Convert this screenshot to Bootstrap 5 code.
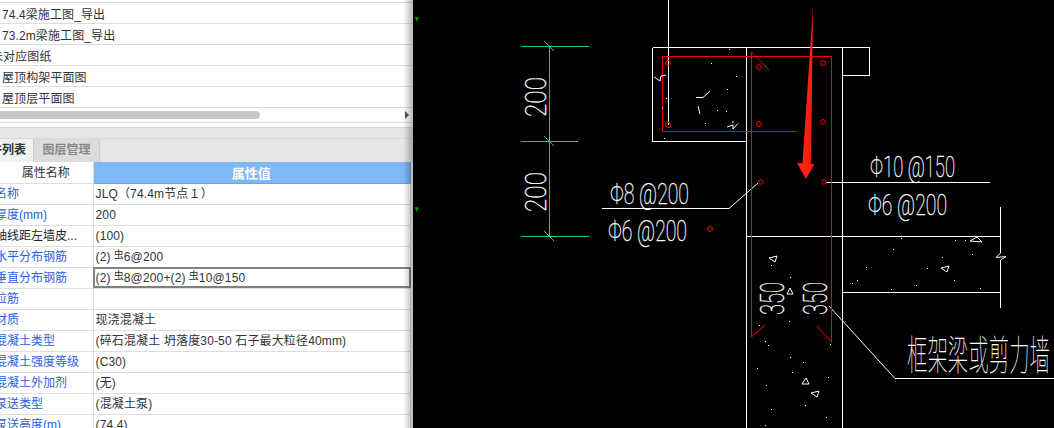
<!DOCTYPE html>
<html lang="zh">
<head>
<meta charset="utf-8">
<title>属性列表</title>
<link href="https://cdn.jsdelivr.net/npm/bootstrap@5.3.0/dist/css/bootstrap.min.css" rel="stylesheet">
<style>
html,body{height:428px;overflow:hidden;background:#000}
body{font:12px/1 "Liberation Sans","Noto Sans CJK SC",sans-serif;color:#333}
.side-panel{width:413px;height:428px;flex:none;background:#fff;overflow:hidden;position:relative}
.side-panel>*{flex:none}
.side-panel::after{content:"";position:absolute;top:0;right:0;bottom:0;width:10px;background:linear-gradient(90deg,rgba(0,0,0,0),rgba(0,0,0,.28));pointer-events:none}
.file-list{padding-top:2px;border-top:0}
.file-list .list-group-item{height:21px;padding:2px 0 0 2px;line-height:20px;background:transparent;color:#333;border:0;border-top:1px solid #ddd;white-space:nowrap;font-size:12px;letter-spacing:.1px}
.file-list .list-group-item:last-child{border-bottom:1px solid #ddd;height:22px}
.clip-in{margin-left:-11px;display:inline-block}
.hscroll{height:14px;position:relative}
.hscroll-thumb{width:260px;height:8px;margin-top:3px;border-radius:0 4px 4px 0;background:#c8c8c8}
.hscroll-arrow{width:0;height:0;border-left:4px solid #555;border-top:4px solid transparent;border-bottom:4px solid transparent;margin-right:4px;margin-top:3px}
.band{height:12px;background:#e6e6e6;border-top:1px solid #d4d4d4;border-bottom:1px solid #d8d8d8;box-sizing:border-box}
.band-wrap{padding-top:4px;border-top:1px solid #ddd}
.tab-row{height:23px;background:#e6e6e6}
.tab-one{width:34px;overflow:hidden;background:#f0f0f0;border-right:1px solid #ccc;font-weight:bold;line-height:23px;color:#333;white-space:nowrap}
.tab-one span{margin-left:-10px;display:inline-block}
.tab-two{width:66px;text-align:center;background:#dcdcdc;border-right:1px solid #ccc;color:#888;font-weight:bold;line-height:23px}
.prop-table{width:411px;table-layout:fixed;margin:0;border-collapse:collapse}
.prop-table th,.prop-table td{height:21px;padding:2px 3px 0 2px;font-size:12px;font-weight:normal;line-height:17px;border:1px solid #ddd;border-left:0;border-top:0;white-space:nowrap;overflow:hidden;color:#333;background:#fff;box-shadow:none;letter-spacing:.15px;vertical-align:middle}
.prop-table th{text-align:center;letter-spacing:0}
.prop-table .val-head{background:#7fb8f5;color:#fff;font-weight:bold;font-size:13px;border-right:1px solid #5d9be0;border-bottom:1px solid #6aa6ea}
.prop-table td.prop-name{color:#2a5fe0;padding:2px 0 0;letter-spacing:0}
.prop-name span{display:block;margin-left:-5px}
.prop-table td.sel-cell{outline:2px solid #808080;outline-offset:-2px}
.rebar{font-size:10px;position:relative;top:-3px;margin:0 0 0 3px}
.cad-view{flex:1 1 auto;background:#000;height:428px;overflow:hidden}
.cad-view svg{display:block}
.cad-w{stroke:#fff;fill:none;stroke-width:1}
.cad-r{stroke:#f00000;fill:none;stroke-width:1}
.cad-g{stroke:#14c88c;fill:none;stroke-width:1}
.cad-txt{font-family:Roboto,"Noto Sans CJK SC",sans-serif;font-weight:100;fill:#fff;stroke:#fff;stroke-width:.35}
.cad-cn{font-family:"Noto Sans CJK SC",sans-serif;font-weight:100;fill:#fff}
.dot{fill:#fff}
</style>
</head>
<body class="d-flex m-0">
<div class="side-panel d-flex flex-column">
  <ul class="list-group list-group-flush file-list rounded-0">
    <li class="list-group-item">74.4梁施工图_导出</li>
    <li class="list-group-item">73.2m梁施工图_导出</li>
    <li class="list-group-item"><span class="clip-in">未对应图纸</span></li>
    <li class="list-group-item">屋顶构架平面图</li>
    <li class="list-group-item">屋顶层平面图</li>
  </ul>
  <div class="hscroll d-flex justify-content-between">
    <div class="hscroll-thumb"></div>
    <div class="hscroll-arrow"></div>
  </div>
  <div class="band-wrap"><div class="band"></div></div>
  <div class="tab-row d-flex">
    <div class="tab-one"><span>件列表</span></div>
    <div class="tab-two">图层管理</div>
  </div>
  <table class="table prop-table">
    <colgroup><col style="width:93px"><col></colgroup>
    <thead><tr><th>属性名称</th><th class="val-head">属性值</th></tr></thead>
    <tbody>
      <tr><td class="prop-name"><span>名称</span></td><td>JLQ（74.4m节点１）</td></tr>
      <tr><td class="prop-name"><span>厚度(mm)</span></td><td>200</td></tr>
      <tr><td class="prop-name text-dark"><span>轴线距左墙皮...</span></td><td>(100)</td></tr>
      <tr><td class="prop-name"><span>水平分布钢筋</span></td><td>(2)<span class="rebar">虫</span>6@200</td></tr>
      <tr><td class="prop-name"><span>垂直分布钢筋</span></td><td class="sel-cell">(2)<span class="rebar">虫</span>8@200+(2)<span class="rebar">虫</span>10@150</td></tr>
      <tr><td class="prop-name"><span>拉筋</span></td><td></td></tr>
      <tr><td class="prop-name"><span>材质</span></td><td>现浇混凝土</td></tr>
      <tr><td class="prop-name"><span>混凝土类型</span></td><td>(碎石混凝土 坍落度30-50 石子最大粒径40mm)</td></tr>
      <tr><td class="prop-name"><span>混凝土强度等级</span></td><td>(C30)</td></tr>
      <tr><td class="prop-name"><span>混凝土外加剂</span></td><td>(无)</td></tr>
      <tr><td class="prop-name"><span>泵送类型</span></td><td>(混凝土泵)</td></tr>
      <tr><td class="prop-name"><span>泵送高度(m)</span></td><td>(74.4)</td></tr>
    </tbody>
  </table>
</div>
<div class="cad-view">
<svg width="641" height="428" viewBox="413 0 641 428" xmlns="http://www.w3.org/2000/svg">
  <path d="M415 18h3l-2 3M415 208h3l-2 3" stroke="#0f0" fill="none"/>
  <g class="cad-g" shape-rendering="crispEdges">
    <path d="M521 46.500H589M521 141.500H578M521 236.500H589M549.500 46V236"/>
  </g>
  <path class="cad-g" d="M544 41L554 51M544 136L554 146M544 231L554 241"/>
  <g class="cad-w" shape-rendering="crispEdges">
    <path d="M668.500 0V125M746.500 47V428M842.500 47V428M652.500 47.500H869.500V75.500H842M652.500 47.500V141.500H746M746 236.500H1000M842 292.500H1000M1000.500 207V253M1000.500 260V308M826 182.500H990M895 378.500H1054M602 208.500H729"/>
  </g>
  <path class="cad-w" d="M729 208.500L758 183M829 306L895 378.500M1000.500 253L996 257.500L1006 256.500L1000.500 260"/>
  <g class="cad-r" shape-rendering="crispEdges">
    <path d="M662.500 131.500V56.500H831.500V342M662.500 131.500H797M751.500 52V337"/>
  </g>
  <g class="cad-r">
    <path d="M751.500 52L769 70M751.500 337L765 325M831.500 342L817 326"/>
    <circle cx="668" cy="63" r="2.500"/><circle cx="668" cy="125" r="2.500"/>
    <circle cx="759" cy="67" r="2.500"/><circle cx="759" cy="124" r="2.500"/>
    <circle cx="823" cy="63" r="2.500"/><circle cx="823" cy="122" r="2.500"/>
    <circle cx="761" cy="182" r="2.200"/><circle cx="824" cy="182" r="2.200"/>
    <circle cx="710" cy="229" r="2.500"/>
  </g>
  <g class="dot">
    <rect x="729" y="49" width="1" height="1"/><rect x="711" y="63" width="1" height="1"/><rect x="736" y="76" width="1" height="1"/>
    <rect x="727" y="89" width="1" height="1"/><rect x="666" y="98" width="1" height="1"/><rect x="662" y="108" width="1" height="1"/>
    <rect x="717" y="110" width="1" height="1"/><rect x="726" y="111" width="1" height="1"/><rect x="705" y="123" width="1" height="1"/>
    <rect x="664" y="138" width="1" height="1"/><rect x="901" y="238" width="1" height="1"/><rect x="893" y="249" width="1" height="1"/>
    <rect x="955" y="240" width="1" height="1"/><rect x="965" y="240" width="1" height="1"/><rect x="972" y="254" width="1" height="1"/>
    <rect x="942" y="257" width="1" height="1"/><rect x="866" y="267" width="1" height="1"/><rect x="927" y="268" width="1" height="1"/>
    <rect x="954" y="280" width="1" height="1"/><rect x="852" y="283" width="1" height="1"/><rect x="857" y="280" width="1" height="1"/>
    <rect x="891" y="289" width="1" height="1"/><rect x="916" y="285" width="1" height="1"/><rect x="980" y="288" width="1" height="1"/>
    <rect x="771" y="265" width="1" height="1"/><rect x="790" y="277" width="1" height="1"/><rect x="759" y="325" width="1" height="1"/>
    <rect x="789" y="321" width="1" height="1"/><rect x="765" y="341" width="1" height="1"/><rect x="768" y="345" width="1" height="1"/>
    <rect x="830" y="344" width="1" height="1"/><rect x="790" y="357" width="1" height="1"/><rect x="803" y="362" width="1" height="1"/>
    <rect x="757" y="368" width="1" height="1"/><rect x="792" y="372" width="1" height="1"/><rect x="828" y="377" width="1" height="1"/>
    <rect x="766" y="385" width="1" height="1"/><rect x="805" y="405" width="1" height="1"/><rect x="771" y="409" width="1" height="1"/>
    <rect x="826" y="417" width="1" height="1"/><rect x="765" y="425" width="1" height="1"/>
  </g>
  <path class="cad-w" d="M696 97.500H703L710 91M698 106L700 114M654 77L660 81L661 76L666 75M727 127L733 125L733 129L738 123.500M733 123V121"/>
  <path class="cad-w" d="M769 258L777 256L775 262ZM790 288L793 294H787ZM970 241L977 237L982 242ZM941 268L949 266L947 272ZM802 384L806 378L809 384ZM811 393L819 391L817 397Z"/>
  <text class="cad-txt" transform="translate(546 117) rotate(-90)" font-size="29" textLength="40" lengthAdjust="spacingAndGlyphs">200</text>
  <text class="cad-txt" transform="translate(546 212) rotate(-90)" font-size="29" textLength="40" lengthAdjust="spacingAndGlyphs">200</text>
  <text class="cad-txt" x="610" y="204" font-size="29" textLength="79" lengthAdjust="spacingAndGlyphs">Φ8 @200</text>
  <text class="cad-txt" x="608" y="241" font-size="29" textLength="79" lengthAdjust="spacingAndGlyphs">Φ6 @200</text>
  <text class="cad-txt" x="870" y="177" font-size="29" textLength="85" lengthAdjust="spacingAndGlyphs">Φ10 @150</text>
  <text class="cad-txt" x="868" y="215" font-size="30" textLength="79" lengthAdjust="spacingAndGlyphs">Φ6 @200</text>
  <text class="cad-txt" transform="translate(784 315) rotate(-90)" font-size="33" textLength="33" lengthAdjust="spacingAndGlyphs">350</text>
  <text class="cad-txt" transform="translate(827 315) rotate(-90)" font-size="33" textLength="33" lengthAdjust="spacingAndGlyphs">350</text>
  <text class="cad-cn" x="907" y="370" font-size="41" textLength="143" lengthAdjust="spacingAndGlyphs">框架梁或剪力墙</text>
  <path d="M813 6L811 164H814.500L806 179L797 163H802.500Z" fill="#ff2010"/>
  <path d="M810.500 50L806.500 163H811Z" fill="#d81c10" opacity=".35"/>
</svg>
</div>
</body>
</html>
